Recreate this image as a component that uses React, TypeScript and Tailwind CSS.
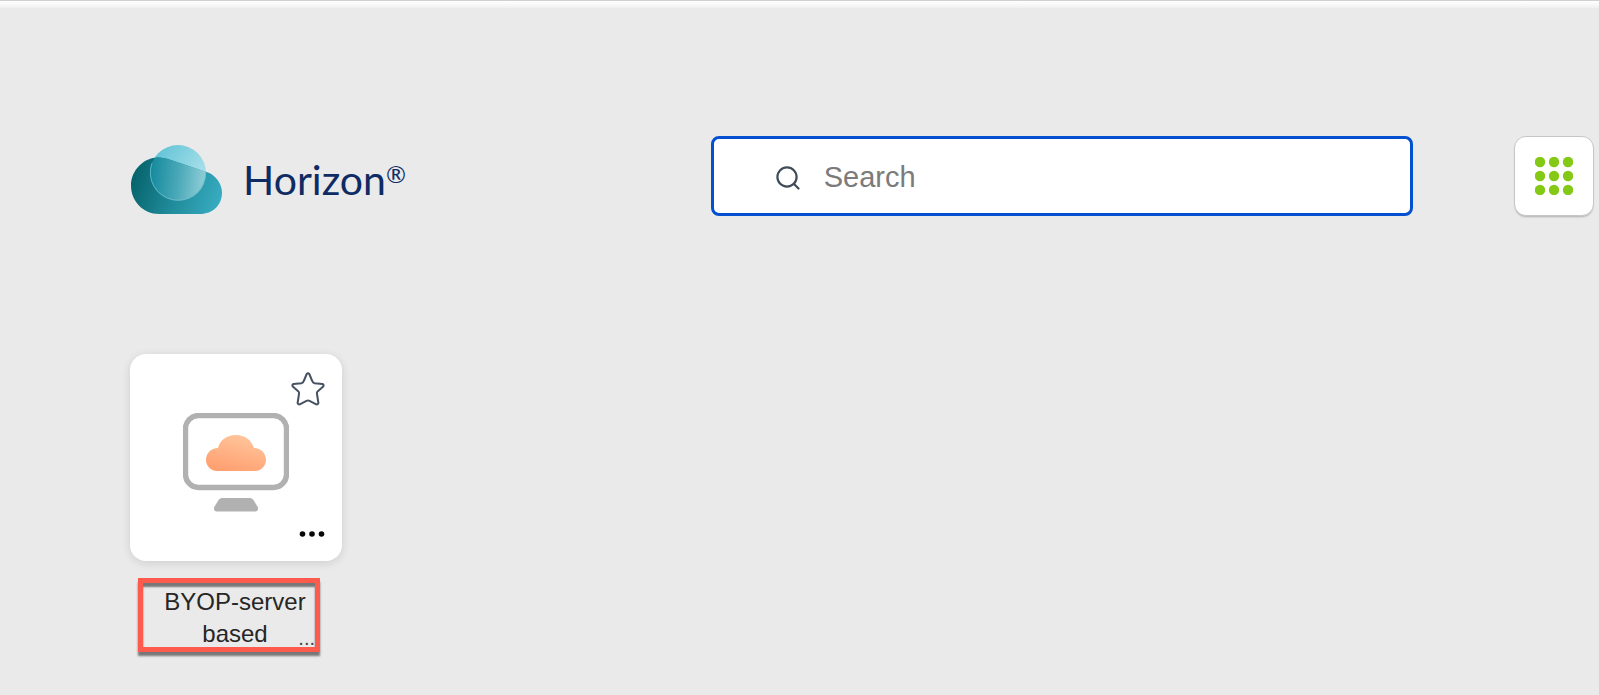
import React from "react";

function HorizonLogo() {
  return (
    <svg width="92" height="70" viewBox="0 0 92 70" aria-hidden="true">
      <defs>
        <linearGradient id="base" x1="0" y1="0.4" x2="1" y2="0.6">
          <stop offset="0" stopColor="#06636c" />
          <stop offset="0.5" stopColor="#1f8a99" />
          <stop offset="1" stopColor="#37abc0" />
        </linearGradient>
        <linearGradient id="sun" x1="0" y1="0" x2="1" y2="0.7">
          <stop offset="0" stopColor="#55bfd4" />
          <stop offset="1" stopColor="#b5e4ec" />
        </linearGradient>
        <linearGradient id="overlap" gradientUnits="userSpaceOnUse" x1="20" y1="32" x2="75" y2="38">
          <stop offset="0" stopColor="#168b9e" />
          <stop offset="0.5" stopColor="#4ba9b8" />
          <stop offset="1" stopColor="#92d0da" />
        </linearGradient>
        <clipPath id="disc">
          <circle cx="47" cy="28" r="28" />
        </clipPath>
      </defs>
      <circle cx="47" cy="28" r="28" fill="url(#sun)" />
      <path d="M28 69C12 69 0 56 0 40.500C0 25 13 12.500 27 12.500C32 12.500 36 13.500 40 15L77 27.500C85 30.500 91 39 91 47.500C91 60 82 69 69 69Z" fill="url(#base)" />
      <path d="M28 69C12 69 0 56 0 40.500C0 25 13 12.500 27 12.500C32 12.500 36 13.500 40 15L77 27.500C85 30.500 91 39 91 47.500C91 60 82 69 69 69Z" fill="url(#overlap)" clipPath="url(#disc)" />
      <path d="M21 18A27.600 27.600 0 1 0 74.500 27" fill="none" stroke="#6cbccb" strokeWidth="0.8" />
    </svg>
  );
}

function SearchIcon() {
  return (
    <svg width="24" height="24" viewBox="0 0 24 24" fill="none" stroke="#3f4b57" strokeWidth="2.2" strokeLinecap="round" aria-hidden="true">
      <circle cx="11" cy="11" r="9.600" />
      <path d="M17.800 17.800L22.500 22.500" />
    </svg>
  );
}

function AppsIcon() {
  const steps = [5, 19, 33];
  return (
    <svg width="38" height="38" viewBox="0 0 38 38" fill="#84c916" aria-hidden="true">
      {steps.map((y) => steps.map((x) => <circle key={`${x}-${y}`} cx={x} cy={y} r="5.200" />))}
    </svg>
  );
}

function StarIcon() {
  return (
    <svg width="34" height="34" viewBox="0 0 34 34" fill="none" stroke="#465161" strokeWidth="2" strokeLinejoin="round" aria-hidden="true">
      <path d="M15.700 2Q17 0.600 18.300 2L21 8.500Q21.600 10.700 23.500 11.200L31.500 12Q33.300 12.900 32.200 14.600L26.300 19.800Q25.600 20.600 26 22L27.400 31Q27 32.800 25.300 32.300L18.500 28.800Q17 28.100 15.500 28.800L8.700 32.300Q7 32.800 6.600 31L8 22Q8.400 20.600 7.700 19.800L1.800 14.600Q0.700 12.900 2.500 12L10.500 11.200Q12.400 10.700 13 8.500Z" />
    </svg>
  );
}

function DesktopIcon() {
  return (
    <svg width="106" height="99" viewBox="0 0 106 99" aria-hidden="true">
      <defs>
        <linearGradient id="peach" x1="0.3" y1="1" x2="0.7" y2="0">
          <stop offset="0" stopColor="#ff9f70" />
          <stop offset="1" stopColor="#ffc69c" />
        </linearGradient>
      </defs>
      <rect x="2.500" y="2.500" width="101" height="72" rx="13" fill="none" stroke="#b1b1b1" strokeWidth="5.400" />
      <path d="M34 58C28 58 23 53 23 47C23 40 28 35 35 35C37 27 44 22 53 22C62 22 68 27 71 35C78 35 83 40 83 47C83 53 78 58 72 58Z" fill="url(#peach)" />
      <path d="M39 85H67Q69 85 70.500 87L75 94.500Q75.500 98.500 72 98.500H34Q30.500 98.500 31 94.500L35.500 87Q37 85 39 85Z" fill="#b1b1b1" />
    </svg>
  );
}

function MoreIcon() {
  return (
    <svg width="26" height="8" viewBox="0 0 26 8" fill="#080808" aria-hidden="true">
      <circle cx="3.500" cy="4" r="2.800" />
      <circle cx="13" cy="4" r="2.800" />
      <circle cx="22.500" cy="4" r="2.800" />
    </svg>
  );
}

export default function App() {
  return (
    <div className="flex min-h-screen flex-col bg-[#eaeaea] font-['Liberation_Sans',Arial,sans-serif]">
      <div className="h-2 border-t border-[#d0d0d0] bg-linear-to-b from-white to-[#f0f0f0]" />
      <header className="mt-32 flex items-center pr-[5px] pl-[131px]">
        <a href="#home" className="flex items-center gap-5 pt-2 text-[#0f2b64]">
          <HorizonLogo />
          <span className="flex items-start font-['Lato',sans-serif] leading-10">
            <span className="text-[41px]">Horizon</span>
            <span className="text-2xl leading-7">®</span>
          </span>
        </a>
        <label className="ml-auto flex h-20 w-[48%] items-center gap-6 rounded-lg border-3 border-[#0550d0] bg-white pt-1 pl-[62px]">
          <SearchIcon />
          <input
            type="search"
            aria-label="Search"
            placeholder="Search"
            className="min-w-0 flex-1 bg-transparent text-[29px] text-[#333] outline-none placeholder:text-[#7b7b7b]"
          />
        </label>
        <button
          type="button"
          aria-label="Apps"
          className="ml-[101px] flex size-20 shrink-0 items-center justify-center rounded-xl border border-[#c6c6c6] bg-white shadow-[0_2px_2px_-1px_#b0b0b0]"
        >
          <AppsIcon />
        </button>
      </header>
      <main className="mt-[138px] pl-[130px]">
        <article className="w-[212px]">
          <div className="relative flex h-[207px] items-center justify-center rounded-2xl bg-white pt-2.5 shadow-[0_2px_10px_rgba(0,0,0,0.12)]">
            <DesktopIcon />
            <button type="button" aria-label="Add to favorites" className="absolute top-[18px] right-[17px]">
              <StarIcon />
            </button>
            <button type="button" aria-label="More options" className="absolute right-[17px] bottom-[23px] flex">
              <MoreIcon />
            </button>
          </div>
          <div className="relative mt-[17px] pt-2 pr-0.5">
            <h2 className="text-center text-2xl leading-8 text-[#262626]">
              <span className="block">BYOP-server</span>
              <span className="grid grid-cols-[1fr_auto_1fr]">
                <span className="col-start-2">based</span>
                <span className="pt-1 pr-[25px] text-right text-xl leading-8 text-[#444]">...</span>
              </span>
            </h2>
            <div className="absolute top-0 left-2 h-[74px] w-[182px] border-5 border-[#fc5b4e] shadow-[0_4px_2px_#777,inset_0_4px_2px_#777]" />
          </div>
        </article>
      </main>
    </div>
  );
}
